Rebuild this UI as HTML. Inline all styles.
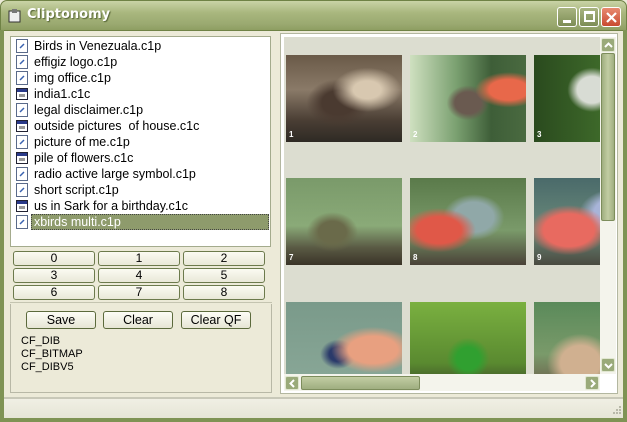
<!DOCTYPE html>
<html><head><meta charset="utf-8"><style>
*{box-sizing:border-box;margin:0;padding:0}
body{width:627px;height:422px;overflow:hidden;background:#ecead8;font-family:"Liberation Sans",sans-serif;position:relative}
.abs{position:absolute}
#title{left:0;top:0;width:627px;height:31px;background:linear-gradient(#c9d3a6,#a9b77e 40%,#9aa970 80%,#8e9e62);border-radius:7px 7px 0 0;border:1px solid #6f8245}
#title .t{left:26px;top:6px;color:#fff;font-family:"DejaVu Sans",sans-serif;font-weight:bold;font-size:13px;text-shadow:1px 1px 1px #566535}
.wb{top:6px;width:20px;height:20px;border:1px solid #fff;border-radius:3px;background:linear-gradient(#a8b480,#7d8d55)}
#frameL{left:0;top:30px;width:4px;height:392px;background:#7f9354}
#frameR{left:623px;top:30px;width:4px;height:392px;background:#7f9354}
#frameB{left:0;top:418px;width:627px;height:4px;background:#7f9354}
#list{left:10px;top:36px;width:261px;height:211px;background:#fff;border:1px solid #a4ab8d}
.it{position:absolute;left:4px;height:16px;font-size:12.5px;line-height:16px;color:#000;white-space:nowrap}
.it span{position:absolute;left:17px;top:0;padding:0 2px}
.ic{position:absolute;left:1px;top:1px;width:12px;height:14px}
.nb{position:absolute;height:15px;width:82px;border:1px solid #6c7a4c;border-radius:3px;background:linear-gradient(#fbfbf2,#e9e8d8);font-size:12px;text-align:center;line-height:13px}
.bb{position:absolute;height:18px;border:1px solid #5c6a3c;border-radius:3px;background:linear-gradient(#fdfdf6,#e6e5d4);font-size:12.5px;text-align:center;line-height:16px}
#lp{left:10px;top:304px;width:262px;height:89px;border:1px solid #b8b8a6;border-top:none}
.cf{position:absolute;left:21px;font-size:11px;line-height:13px}
#rp{left:280px;top:33px;width:338px;height:361px;background:#fff;border:1px solid #b3b7a0}
#grid{left:284px;top:37px;width:316px;height:337px;background:#dcddd0;overflow:hidden}
.im{position:absolute;width:116px;height:87px;font-size:8px;color:#fff;font-weight:bold}
.im b{position:absolute;left:3px;bottom:3px}
.sb{background:linear-gradient(90deg,#9fae80,#c2cda3 50%,#9fae80)}
</style></head><body>
<div id="title" class="abs">
 <svg class="abs" style="left:7px;top:7px" width="14" height="15"><rect x="1" y="3" width="11" height="11" fill="#eee" stroke="#333"/><rect x="4" y="1" width="5" height="4" fill="#777"/></svg>
 <div class="t abs">Cliptonomy</div>
 <div class="wb abs" style="left:556px"><div class="abs" style="left:5px;top:12px;width:8px;height:3px;background:#fff"></div></div>
 <div class="wb abs" style="left:578px"><div class="abs" style="left:4px;top:3px;width:11px;height:11px;border:2px solid #fff;border-top-width:3px"></div></div>
 <div class="wb abs" style="left:600px;background:linear-gradient(#e88a70,#c84a30)"><svg class="abs" style="left:3px;top:3px" width="13" height="13"><path d="M2 2L11 11M11 2L2 11" stroke="#fff" stroke-width="2.2"/></svg></div>
</div>
<div id="frameL" class="abs"></div><div id="frameR" class="abs"></div><div id="frameB" class="abs"></div>

<div id="list" class="abs">
<div class="it" style="top:1px"><svg class="ic"><rect x=".5" y=".5" width="11" height="13" fill="#fff" stroke="#5a6a8a"/><path d="M4 9L8 5" stroke="#3a62b0" stroke-width="1.5"/></svg><span>Birds in Venezuala.c1p</span></div>
<div class="it" style="top:17px"><svg class="ic"><rect x=".5" y=".5" width="11" height="13" fill="#fff" stroke="#5a6a8a"/><path d="M4 9L8 5" stroke="#3a62b0" stroke-width="1.5"/></svg><span>effigiz logo.c1p</span></div>
<div class="it" style="top:33px"><svg class="ic"><rect x=".5" y=".5" width="11" height="13" fill="#fff" stroke="#5a6a8a"/><path d="M4 9L8 5" stroke="#3a62b0" stroke-width="1.5"/></svg><span>img office.c1p</span></div>
<div class="it" style="top:49px"><svg class="ic"><rect x=".5" y="1.5" width="11" height="11" fill="#fff" stroke="#223"/><rect x="1" y="2" width="10" height="3" fill="#2a3a8a"/><rect x="3" y="7" width="6" height="3" fill="#999"/></svg><span>india1.c1c</span></div>
<div class="it" style="top:65px"><svg class="ic"><rect x=".5" y=".5" width="11" height="13" fill="#fff" stroke="#5a6a8a"/><path d="M4 9L8 5" stroke="#3a62b0" stroke-width="1.5"/></svg><span>legal disclaimer.c1p</span></div>
<div class="it" style="top:81px"><svg class="ic"><rect x=".5" y="1.5" width="11" height="11" fill="#fff" stroke="#223"/><rect x="1" y="2" width="10" height="3" fill="#2a3a8a"/><rect x="3" y="7" width="6" height="3" fill="#999"/></svg><span>outside pictures&nbsp; of house.c1c</span></div>
<div class="it" style="top:97px"><svg class="ic"><rect x=".5" y=".5" width="11" height="13" fill="#fff" stroke="#5a6a8a"/><path d="M4 9L8 5" stroke="#3a62b0" stroke-width="1.5"/></svg><span>picture of me.c1p</span></div>
<div class="it" style="top:113px"><svg class="ic"><rect x=".5" y="1.5" width="11" height="11" fill="#fff" stroke="#223"/><rect x="1" y="2" width="10" height="3" fill="#2a3a8a"/><rect x="3" y="7" width="6" height="3" fill="#999"/></svg><span>pile of flowers.c1c</span></div>
<div class="it" style="top:129px"><svg class="ic"><rect x=".5" y=".5" width="11" height="13" fill="#fff" stroke="#5a6a8a"/><path d="M4 9L8 5" stroke="#3a62b0" stroke-width="1.5"/></svg><span>radio active large symbol.c1p</span></div>
<div class="it" style="top:145px"><svg class="ic"><rect x=".5" y=".5" width="11" height="13" fill="#fff" stroke="#5a6a8a"/><path d="M4 9L8 5" stroke="#3a62b0" stroke-width="1.5"/></svg><span>short script.c1p</span></div>
<div class="it" style="top:161px"><svg class="ic"><rect x=".5" y="1.5" width="11" height="11" fill="#fff" stroke="#223"/><rect x="1" y="2" width="10" height="3" fill="#2a3a8a"/><rect x="3" y="7" width="6" height="3" fill="#999"/></svg><span>us in Sark for a birthday.c1c</span></div>
<div style="position:absolute;left:20px;top:177px;width:238px;height:16px;background:#8e9b6c;border:1px dotted #444"></div>
<div class="it" style="top:177px"><svg class="ic"><rect x=".5" y=".5" width="11" height="13" fill="#fff" stroke="#5a6a8a"/><path d="M4 9L8 5" stroke="#3a62b0" stroke-width="1.5"/></svg><span style="color:#fff">xbirds multi.c1p</span></div>
</div>

<div class="nb" style="left:13px;top:251px">0</div><div class="nb" style="left:98px;top:251px">1</div><div class="nb" style="left:183px;top:251px">2</div>
<div class="nb" style="left:13px;top:268px">3</div><div class="nb" style="left:98px;top:268px">4</div><div class="nb" style="left:183px;top:268px">5</div>
<div class="nb" style="left:13px;top:285px">6</div><div class="nb" style="left:98px;top:285px">7</div><div class="nb" style="left:183px;top:285px">8</div>
<div class="abs" style="left:10px;top:302px;width:262px;height:1px;background:#c4c4b0"></div>
<div id="lp" class="abs"></div>
<div class="bb" style="left:26px;top:311px;width:70px">Save</div>
<div class="bb" style="left:103px;top:311px;width:70px">Clear</div>
<div class="bb" style="left:181px;top:311px;width:70px">Clear QF</div>
<div class="cf" style="top:335px">CF_DIB</div>
<div class="cf" style="top:348px">CF_BITMAP</div>
<div class="cf" style="top:361px">CF_DIBV5</div>

<div id="rp" class="abs"></div>
<div id="grid" class="abs">
 <div class="im" style="left:2px;top:18px;background:radial-gradient(ellipse at 70% 40%,#d8c8b0 0 12%,transparent 30%),radial-gradient(ellipse at 45% 55%,#4a3a30 0 18%,transparent 35%),linear-gradient(#6a5a48,#8a7a68 40%,#4a3e34 75%,#2e2a24)"><b>1</b></div>
 <div class="im" style="left:126px;top:18px;background:radial-gradient(ellipse at 85% 40%,#e8684a 0 14%,transparent 24%),radial-gradient(ellipse at 50% 55%,#6a5a50 0 16%,transparent 26%),linear-gradient(90deg,#cfe0c0,#7aa070 40%,#3e5e38 70%,#4a6a40)"><b>2</b></div>
 <div class="im" style="left:250px;top:18px;background:radial-gradient(ellipse at 50% 40%,#d8dcd4 0 18%,transparent 30%),linear-gradient(90deg,#2a4a1e,#3e6a2a 60%,#c8c060)"><b>3</b></div>
 <div class="im" style="left:2px;top:141px;background:radial-gradient(ellipse at 40% 62%,#6a6a4a 0 14%,transparent 26%),linear-gradient(#7a9a6a,#8aaa78 55%,#5a5a44 80%,#3a3428)"><b>7</b></div>
 <div class="im" style="left:126px;top:141px;background:radial-gradient(ellipse at 25% 60%,#e05848 0 18%,transparent 30%),radial-gradient(ellipse at 55% 45%,#90a8a8 0 22%,transparent 34%),linear-gradient(#5a7a4a,#7a9a6a 60%,#4a4238)"><b>8</b></div>
 <div class="im" style="left:250px;top:141px;background:radial-gradient(ellipse at 30% 60%,#e86a60 0 22%,transparent 34%),radial-gradient(ellipse at 75% 40%,#a8b4d8 0 22%,transparent 34%),linear-gradient(#4a6a6a,#6a8a7a 60%,#4a4a40)"><b>9</b></div>
 <div class="im" style="left:2px;top:265px;background:radial-gradient(ellipse at 75% 55%,#e8a080 0 20%,transparent 34%),radial-gradient(ellipse at 45% 60%,#2a3a6a 0 10%,transparent 20%),linear-gradient(#7a9a8a,#8aa898)"></div>
 <div class="im" style="left:126px;top:265px;background:radial-gradient(ellipse at 50% 65%,#30a030 0 14%,transparent 26%),linear-gradient(#7ab040,#5a8a30 70%,#3a4a28)"></div>
 <div class="im" style="left:250px;top:265px;background:radial-gradient(ellipse at 40% 70%,#d0b090 0 20%,transparent 34%),linear-gradient(#5a8a5a,#7a9a6a 60%,#6a5a48)"></div>
</div>
<div class="abs" style="left:600px;top:37px;width:16px;height:337px;background:#f4f4ec"></div>
<div class="abs" style="left:601px;top:38px;width:14px;height:14px;background:#9aaa7a;border:1px solid #e0e6d0;border-radius:2px"><svg class="abs" style="left:2px;top:3px" width="9" height="7"><path d="M1 5L4.5 1.5L8 5" stroke="#fff" stroke-width="2" fill="none"/></svg></div>
<div class="abs sb" style="left:601px;top:53px;width:14px;height:168px;border:1px solid #7d8d5c;border-radius:2px"></div>
<div class="abs" style="left:601px;top:358px;width:14px;height:14px;background:#9aaa7a;border:1px solid #e0e6d0;border-radius:2px"><svg class="abs" style="left:2px;top:3px" width="9" height="7"><path d="M1 2L4.5 5.5L8 2" stroke="#fff" stroke-width="2" fill="none"/></svg></div>
<div class="abs" style="left:284px;top:374px;width:316px;height:17px;background:#f4f4ec"></div>
<div class="abs" style="left:285px;top:376px;width:14px;height:14px;background:#9aaa7a;border:1px solid #e0e6d0;border-radius:2px"><svg class="abs" style="left:3px;top:2px" width="7" height="9"><path d="M5 1L1.5 4.5L5 8" stroke="#fff" stroke-width="2" fill="none"/></svg></div>
<div class="abs" style="left:301px;top:376px;width:119px;height:14px;border:1px solid #7d8d5c;border-radius:2px;background:linear-gradient(#c2cda3,#9fae80)"></div>
<div class="abs" style="left:585px;top:376px;width:14px;height:14px;background:#9aaa7a;border:1px solid #e0e6d0;border-radius:2px"><svg class="abs" style="left:3px;top:2px" width="7" height="9"><path d="M2 1L5.5 4.5L2 8" stroke="#fff" stroke-width="2" fill="none"/></svg></div>
<div class="abs" style="left:4px;top:397px;width:619px;height:2px;background:#c8c8b8"></div>
<div class="abs" style="left:4px;top:399px;width:619px;height:19px;background:linear-gradient(#f0efe4,#e6e5d6)"></div>
<svg class="abs" style="left:610px;top:405px" width="12" height="12"><g fill="#b8b8a8"><rect x="9" y="1" width="2" height="2"/><rect x="6" y="4" width="2" height="2"/><rect x="9" y="4" width="2" height="2"/><rect x="3" y="7" width="2" height="2"/><rect x="6" y="7" width="2" height="2"/><rect x="9" y="7" width="2" height="2"/></g></svg>
</body></html>
